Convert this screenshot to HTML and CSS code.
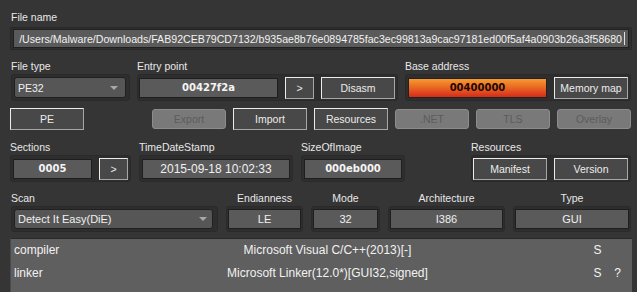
FILE: index.html
```html
<!DOCTYPE html>
<html>
<head>
<meta charset="utf-8">
<link rel="stylesheet" href="styles.css">
</head>
<body>
<div class="app">
  <div class="lbl lbl-first">File name</div>
  <div class="fframe">
    <div class="fname"><span class="path">/Users/Malware/Downloads/FAB92CEB79CD7132/b935ae8b76e0894785fac3ec99813a9cac97181ed00f5af4a0903b26a3f58680</span><span class="caret"></span></div>
  </div>

  <div class="row r2">
    <div class="col">
      <div class="lbl">File type</div>
      <div class="grp g-ftype"><div class="combo c-pe">PE32<span class="arrow"></span></div></div>
    </div>
    <div class="col">
      <div class="lbl">Entry point</div>
      <div class="grp g-entry">
        <div class="val b w139">00427f2a</div>
        <div class="btn w29">&gt;</div>
        <div class="btn w74">Disasm</div>
      </div>
    </div>
    <div class="col">
      <div class="lbl">Base address</div>
      <div class="grp g-base">
        <div class="val b orange w139">00400000</div>
        <div class="btn w74">Memory map</div>
      </div>
    </div>
  </div>

  <div class="row r3">
    <div class="btn w74">PE</div>
    <div class="btns">
      <div class="btn dis w74">Export</div>
      <div class="btn w74">Import</div>
      <div class="btn w74">Resources</div>
      <div class="btn dis w74">.NET</div>
      <div class="btn dis w74">TLS</div>
      <div class="btn dis w74">Overlay</div>
    </div>
  </div>

  <div class="row r4">
    <div class="col">
      <div class="lbl">Sections</div>
      <div class="grp g-sec">
        <div class="val b w79">0005</div>
        <div class="btn w29">&gt;</div>
      </div>
    </div>
    <div class="col">
      <div class="lbl">TimeDateStamp</div>
      <div class="grp g-one"><div class="val ts w148">2015-09-18 10:02:33</div></div>
    </div>
    <div class="col">
      <div class="lbl">SizeOfImage</div>
      <div class="grp g-one"><div class="val b w98">000eb000</div></div>
    </div>
    <div class="col col-res">
      <div class="lbl">Resources</div>
      <div class="grp g-res">
        <div class="btn w74">Manifest</div>
        <div class="btn w74">Version</div>
      </div>
    </div>
  </div>

  <div class="row r5">
    <div class="col col-scan">
      <div class="lbl">Scan</div>
      <div class="grp g-scan"><div class="combo c-scan">Detect It Easy(DiE)<span class="arrow"></span></div></div>
    </div>
    <div class="col ctr">
      <div class="lbl">Endianness</div>
      <div class="grp g-small"><div class="val w73">LE</div></div>
    </div>
    <div class="col ctr">
      <div class="lbl">Mode</div>
      <div class="grp g-small"><div class="val w65">32</div></div>
    </div>
    <div class="col ctr">
      <div class="lbl">Architecture</div>
      <div class="grp g-small"><div class="val w113">I386</div></div>
    </div>
    <div class="col ctr">
      <div class="lbl">Type</div>
      <div class="grp g-small"><div class="val w114">GUI</div></div>
    </div>
  </div>

  <div class="results">
    <div class="rrow"><span>compiler</span><span class="mid">Microsoft Visual C/C++(2013)[-]</span><span class="ctrc">S</span><span class="ctrc"></span></div>
    <div class="rrow"><span>linker</span><span class="mid">Microsoft Linker(12.0*)[GUI32,signed]</span><span class="ctrc">S</span><span class="ctrc">?</span></div>
  </div>
</div>
</body>
</html>
```

FILE: styles.css
```css
* { box-sizing: border-box; margin: 0; padding: 0; }
html, body {
  width: 637px;
  height: 292px;
  overflow: hidden;
  background: #353535;
}
body {
  font-family: "Liberation Sans", Arial, sans-serif;
  font-size: 10.5px;
  color: #e8e8e8;
}
.app {
  width: 637px;
  padding: 11px 6px 0 10px;
}
.lbl {
  height: 12px;
  line-height: 12px;
  white-space: nowrap;
  margin-bottom: 2px;
}
.lbl-first { margin-left: 1px; margin-bottom: 4px; }

/* file name field */
.fframe {
  height: 23px;
  margin-right: -1px;
  background: #2e2e2e;
  border: 1px solid #282828;
  border-radius: 2px;
  padding: 1px 2px;
}
.fname {
  height: 19px;
  background: #5a5a5a;
  border: 1px solid #202020;
  display: flex;
  justify-content: flex-end;
  align-items: center;
  overflow: hidden;
  padding-right: 3px;
  color: #f2f2f2;
  font-size: 10.62px;
}
.path { flex-shrink: 0; white-space: nowrap; }
.caret {
  flex-shrink: 0;
  width: 1px;
  height: 13px;
  margin-left: 2px;
  background: #e0e0e0;
}

.row { display: flex; }
.col { display: flex; flex-direction: column; }
.ctr { align-items: center; }

.r2 { margin-top: 10px; gap: 7px; }
.r3 { margin-top: 7px; height: 22px; align-items: center; justify-content: space-between; }
.r4 { margin-top: 11px; gap: 8px; }
.r5 { margin-top: 10px; gap: 8px; }
.col-res { margin-left: auto; }
.col-scan { margin-left: 1px; }
.r2 .col:first-child { margin-left: 1px; }

.grp {
  display: flex;
  align-items: center;
  height: 27px;
  background: #2e2e2e;
  border: 1px solid #2a2a2a;
  border-radius: 3px;
  gap: 7px;
  padding: 0 2px;
}
.g-ftype { width: 119px; padding: 0 3px 0 2px; }
.g-entry { width: 261px; padding: 0 2px 0 1px; }
.g-base { width: 226px; }
.g-sec { width: 121px; }
.g-one { padding: 0 2px; }
.g-res { width: 160px; padding: 0 2px 0 1px; }
.g-scan { height: 26px; width: 207px; padding: 0 4px 0 2px; }
.g-small { height: 26px; padding: 0 1px; }

.w29 { width: 29px; }
.w65 { width: 65px; }
.w73 { width: 73px; }
.w74 { width: 74px; }
.w79 { width: 79px; }
.w98 { width: 98px; }
.w113 { width: 113px; }
.w114 { width: 114px; }
.w139 { width: 139px; }
.w148 { width: 148px; }

.val {
  flex-shrink: 0;
  height: 20px;
  background: #5a5a5a;
  border: 1px solid #1e1e1e;
  display: flex;
  align-items: center;
  justify-content: center;
  color: #f0f0f0;
  font-size: 11px;
  white-space: nowrap;
}
.val.b {
  font-family: "DejaVu Sans", Verdana, sans-serif;
  font-weight: bold;
  font-size: 10px;
  color: #f4f4f4;
}
.val.ts { font-size: 12px; }
.val.orange {
  background: linear-gradient(#f59a30 0%, #ea6a24 45%, #d62a1a 100%);
  border-color: #222;
  color: #1c0800;
}

.btn {
  flex-shrink: 0;
  height: 22px;
  background: #484848;
  border: 1px solid;
  border-color: #ececec #a6a6a6 #a6a6a6 #ececec;
  display: flex;
  align-items: center;
  justify-content: center;
  color: #ececec;
  white-space: nowrap;
}
.btn.dis {
  height: 20px;
  background: #797979;
  border: 1px solid #8c8c8c;
  border-radius: 3px;
  color: #5c5c5c;
}
.btns { display: flex; gap: 7px; align-items: center; }

.combo {
  position: relative;
  height: 21px;
  background: #565656;
  border: 1px solid #202020;
  border-radius: 3px;
  display: flex;
  align-items: center;
  padding-left: 3px;
  color: #f0f0f0;
  white-space: nowrap;
}
.c-pe { width: 112px; }
.c-scan { width: 199px; height: 20px; font-size: 11px; }
.arrow {
  position: absolute;
  right: 7px;
  top: 8px;
  width: 0;
  height: 0;
  border-left: 4px solid transparent;
  border-right: 4px solid transparent;
  border-top: 4px solid #a8a8a8;
}
.c-scan .arrow { right: 5px; top: 7px; }

.results {
  margin-top: 6px;
  height: 60px;
  margin-right: -1px;
  background: #5f5f5f;
  border-top: 1px solid #2a2a2a;
  border-left: 1px solid #4a4a4a;
  padding-left: 3px;
  font-size: 12px;
  color: #f2f2f2;
}
.rrow {
  display: grid;
  grid-template-columns: 56px 515px 25px 15px;
  height: 23px;
  line-height: 23px;
  white-space: nowrap;
}
.mid { text-align: center; }
.ctrc { text-align: center; }
```
